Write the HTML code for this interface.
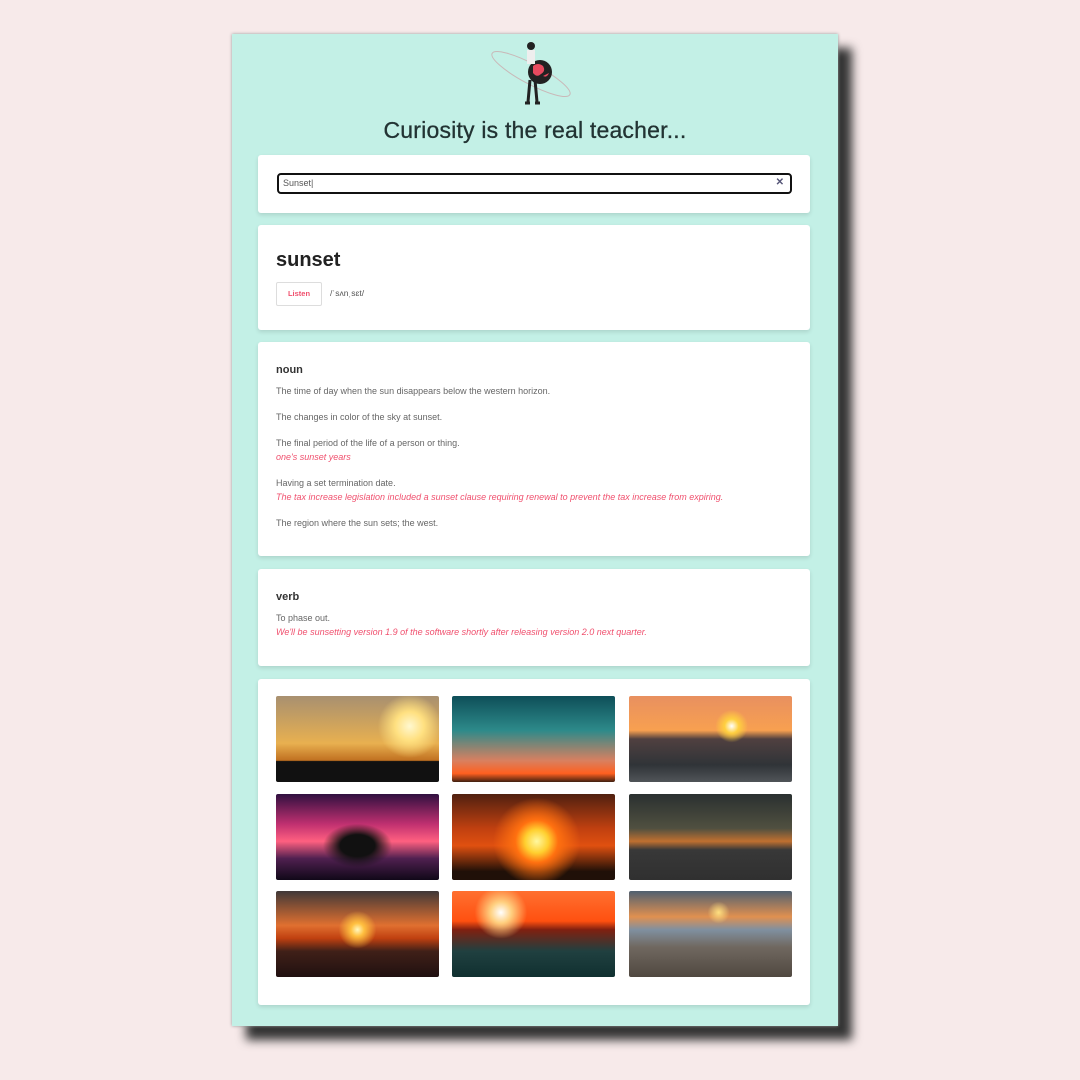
<!DOCTYPE html>
<html><head><meta charset="utf-8"><style>
*{margin:0;padding:0;box-sizing:border-box}
body{width:1080px;height:1080px;background:#f7eaea;font-family:"Liberation Sans",sans-serif;position:relative;overflow:hidden}
.shadow{position:absolute;left:246px;top:48px;width:606px;height:992px;background:#333;filter:blur(5px)}
.panel{position:absolute;left:232px;top:34px;width:606px;height:992px;background:#c3f0e6;box-shadow:0 0 3px #999}
.card{position:absolute;left:26px;width:552px;background:#fff;border-radius:3px;box-shadow:0 2px 4px rgba(0,0,0,.12)}
h1{position:absolute;left:0;width:606px;top:83px;text-align:center;font-size:23px;font-weight:normal;color:#233;letter-spacing:0.2px;-webkit-text-stroke:0.3px #233}
.inp{position:absolute;left:19px;top:18px;width:515px;height:21px;border:2.5px solid #111;border-radius:4px;font-size:9px;color:#555;padding:3px 4px}
.x{position:absolute;right:6px;top:2px;color:#557;font-size:10px;font-weight:bold}
.p{font-size:9px;color:#666;margin-bottom:12px;line-height:14px}
.e{color:#f0506e;font-style:italic;display:block}
.pos{font-size:11px;font-weight:bold;color:#333;margin-bottom:8px;margin-top:2px}
.img{position:absolute;width:163px;height:86px;border-radius:2px}
</style></head><body>
<div class="shadow"></div>
<div class="panel">
<svg style="position:absolute;left:255px;top:2px" width="95" height="72" viewBox="0 0 95 72">
<ellipse cx="44" cy="38" rx="44" ry="10" transform="rotate(28 44 38)" fill="none" stroke="#c9b8b8" stroke-width="1"/>
<circle cx="53" cy="36" r="12" fill="#222"/>
<path d="M46 30 q5 -4 10 0 q3 5 -2 8 q-4 4 -8 -1z M56 40 q4 2 6 -3" fill="#e84a5f"/>
<circle cx="44" cy="10" r="4" fill="#222"/>
<rect x="40" y="14" width="8" height="14" fill="#eee"/>
<path d="M43 44 l-2 22 M48 44 l2 22" stroke="#222" stroke-width="3"/>
<path d="M38 67 h5 M48 67 h5" stroke="#222" stroke-width="3"/>
</svg>
<h1>Curiosity is the real teacher...</h1>
<div class="card" style="top:121px;height:58px"><div class="inp">Sunset|<span class="x">✕</span></div></div>
<div class="card" style="top:191px;height:105px">
<div style="position:absolute;left:18px;top:24px;font-size:20px;font-weight:bold;color:#222">sunset</div>
<div style="position:absolute;left:18px;top:57px;width:46px;height:24px;border:1px solid #ddd;border-radius:2px;color:#f0506e;font-size:7.5px;font-weight:bold;text-align:center;line-height:22px">Listen</div>
<div style="position:absolute;left:72px;top:63px;font-size:8.5px;color:#555">/ˈsʌnˌsɛt/</div>
</div>
<div class="card" style="top:308px;height:214px;padding:20px 18px">
<div class="pos">noun</div>
<div class="p">The time of day when the sun disappears below the western horizon.</div>
<div class="p">The changes in color of the sky at sunset.</div>
<div class="p">The final period of the life of a person or thing.<span class="e">one's sunset years</span></div>
<div class="p">Having a set termination date.<span class="e">The tax increase legislation included a sunset clause requiring renewal to prevent the tax increase from expiring.</span></div>
<div class="p">The region where the sun sets; the west.</div>
</div>
<div class="card" style="top:535px;height:97px;padding:20px 18px">
<div class="pos">verb</div>
<div class="p">To phase out.<span class="e">We'll be sunsetting version 1.9 of the software shortly after releasing version 2.0 next quarter.</span></div>
</div>
<div class="card" style="top:645px;height:326px">
<div class="img" style="left:18px;top:17px;background:radial-gradient(circle at 82% 35%,#fff8d0 0,#ffe080 10%,transparent 22%),linear-gradient(#a89070,#e8b050 55%,#c07020 75%,#111 76%)"></div>
<div class="img" style="left:194px;top:17px;background:linear-gradient(#0e4e58,#2d8a8a 40%,#d88060 75%,#ff6020 90%,#402010)"></div>
<div class="img" style="left:371px;top:17px;background:radial-gradient(circle at 63% 35%,#fff 0,#ffd040 6%,transparent 14%),linear-gradient(#e89060,#f8a050 40%,#504040 50%,#303438 80%,#505458)"></div>
<div class="img" style="left:18px;top:115px;background:radial-gradient(ellipse at 50% 60%,#111 0,#111 15%,transparent 30%),linear-gradient(#301040,#c03070 35%,#ff6080 55%,#502050 75%,#100818)"></div>
<div class="img" style="left:194px;top:115px;background:radial-gradient(circle at 52% 55%,#fff8a0 0,#ffd030 12%,#ff7010 22%,transparent 45%),linear-gradient(#502010,#c04010 40%,#e05010 60%,#201008 90%)"></div>
<div class="img" style="left:371px;top:115px;background:linear-gradient(#2a3030,#505040 40%,#c07030 55%,#383838 65%,#303030)"></div>
<div class="img" style="left:18px;top:212px;background:radial-gradient(circle at 50% 45%,#fff8c0 0,#ffc040 7%,transparent 20%),linear-gradient(#403838,#e07030 40%,#c04010 55%,#402018 70%,#201010)"></div>
<div class="img" style="left:194px;top:212px;background:radial-gradient(circle at 30% 25%,#fff 0,#ffd080 8%,transparent 20%),linear-gradient(#ff7030,#ff5010 35%,#802010 45%,#204040 70%,#103030)"></div>
<div class="img" style="left:371px;top:212px;background:radial-gradient(circle at 55% 25%,#ffe080 0,transparent 10%),linear-gradient(#506070,#e09050 30%,#8090a0 45%,#706860 65%,#504840)"></div>
</div>
</div>
</body></html>
